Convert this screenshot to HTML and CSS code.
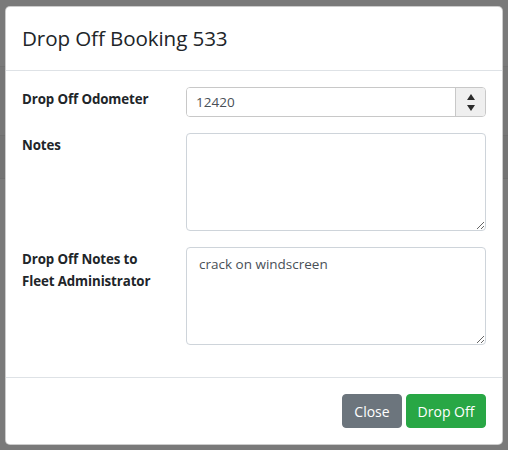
FILE: index.html
```html
<!DOCTYPE html>
<html>
<head>
<meta charset="utf-8">
<link rel="stylesheet" href="styles.css">
</head>
<body>
<div class="backdrop">
  <div class="modal">
    <div class="modal-header">
      <h5 class="modal-title">Drop Off Booking 533</h5>
    </div>
    <div class="modal-body">
      <div class="form-row">
        <label class="form-label">Drop Off Odometer</label>
        <div class="form-field">
          <div class="number-input">
            <input class="number-value" type="text" value="12420">
            <div class="spin">
              <span class="tri-up"></span>
              <span class="tri-down"></span>
            </div>
          </div>
        </div>
      </div>
      <div class="form-row">
        <label class="form-label">Notes</label>
        <div class="form-field">
          <textarea class="text-area" rows="4"></textarea>
        </div>
      </div>
      <div class="form-row">
        <label class="form-label">Drop Off Notes to Fleet Administrator</label>
        <div class="form-field">
          <textarea class="text-area" rows="4">crack on windscreen</textarea>
        </div>
      </div>
    </div>
    <div class="modal-footer">
      <button class="btn btn-secondary">Close</button>
      <button class="btn btn-success">Drop Off</button>
    </div>
  </div>
</div>
</body>
</html>
```

FILE: styles.css
```css
html, body {
  margin: 0;
  padding: 0;
}
body {
  width: 508px;
  height: 450px;
  overflow: hidden;
  font-family: "Open Sans", "Noto Sans", "Liberation Sans", sans-serif;
  color: #212529;
  background:
    linear-gradient(to bottom,
      #7a7a7a 0, #7a7a7a 66px,
      #727272 66px, #727272 67px,
      #777777 67px, #777777 135px,
      #6f6f6f 135px, #6f6f6f 136px,
      #747474 136px, #747474 178px,
      #6f6f6f 178px, #6f6f6f 179px,
      #7a7a7a 179px, #7a7a7a 100%);
}
.backdrop {
  padding: 6px 5px;
}
.modal {
  width: 498px;
  box-sizing: border-box;
  background: #fff;
  border: 1px solid rgba(0,0,0,.2);
  border-radius: 5px;
}
.modal-header {
  padding: 16px;
  border-bottom: 1px solid #dee2e6;
}
.modal-title {
  margin: 0;
  font-size: 20.6px;
  font-weight: 400;
  line-height: 31px;
  letter-spacing: -0.1px;
}
.modal-body {
  padding: 16px;
}
.form-row {
  display: grid;
  grid-template-columns: 164px 1fr;
  margin-bottom: 16px;
}
.form-label {
  font-size: 13.3px;
  font-weight: 700;
  line-height: 22px;
  padding: 1px 15px 0 0;
  letter-spacing: -0.1px;
}
.form-field {
  min-width: 0;
}
.number-input {
  display: flex;
  height: 30px;
  box-sizing: border-box;
  border: 1px solid #c8c8c8;
  border-radius: 4px;
  overflow: hidden;
}
.number-value {
  flex: 1;
  min-width: 0;
  border: 0;
  outline: 0;
  padding: 0 9px;
  font-family: inherit;
  font-size: 13.5px;
  color: #495057;
  background: #fff;
}
.spin {
  width: 29px;
  border-left: 1px solid #c8c8c8;
  background: #efefef;
  display: flex;
  flex-direction: column;
  align-items: center;
  justify-content: center;
  gap: 5px;
}
.tri-up, .tri-down {
  width: 0;
  height: 0;
  border-left: 4px solid transparent;
  border-right: 4px solid transparent;
}
.tri-up {
  border-bottom: 6px solid #2b2b2b;
}
.tri-down {
  border-top: 6px solid #2b2b2b;
}
.text-area {
  display: block;
  width: 100%;
  box-sizing: border-box;
  height: 98px;
  padding: 6px 12px;
  border: 1px solid #ced4da;
  border-radius: 4px;
  font-family: inherit;
  font-size: 13.5px;
  line-height: 21px;
  color: #495057;
  resize: vertical;
  outline: 0;
}
.modal-footer {
  border-top: 1px solid #dee2e6;
  padding: 16px;
  display: flex;
  justify-content: flex-end;
  gap: 4px;
}
.btn {
  font-family: inherit;
  font-size: 14px;
  line-height: 21px;
  height: 34px;
  padding: 0 9px;
  border: 1px solid transparent;
  border-radius: 4px;
  color: #fff;
  white-space: nowrap;
  cursor: pointer;
}
.btn-secondary {
  background: #6c757d;
  border-color: #6c757d;
  min-width: 60px;
}
.btn-success {
  background: #28a745;
  border-color: #28a745;
  min-width: 80px;
}
```
